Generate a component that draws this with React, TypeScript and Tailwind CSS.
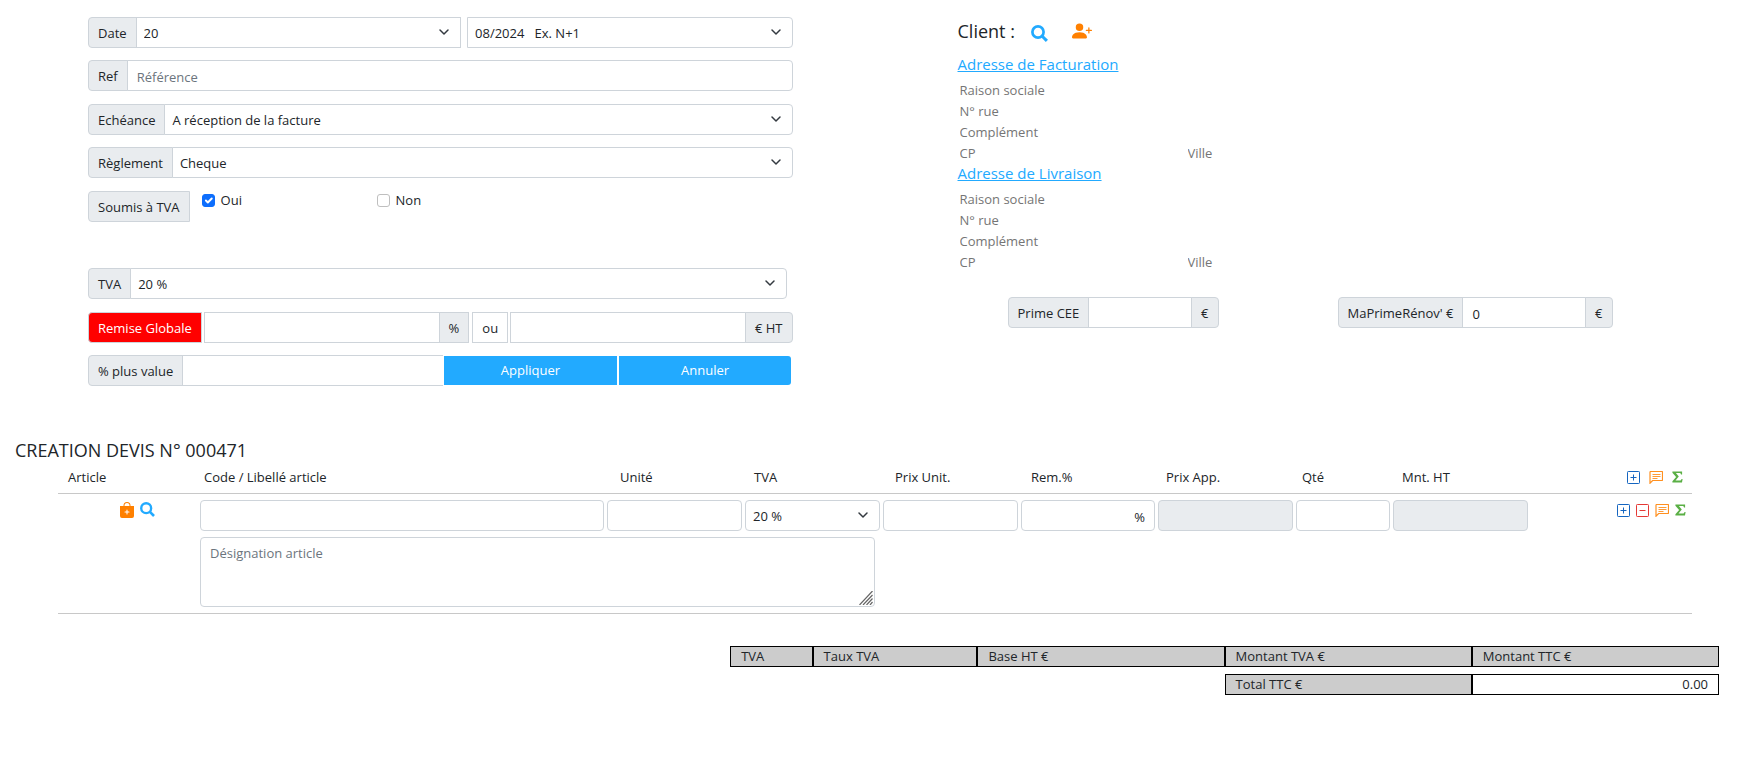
import React, { useState } from "react";
import { BsBagPlusFill, BsPersonPlusFill } from "react-icons/bs";
import clsx from "clsx";

const field =
  "h-[31px] min-w-0 border border-[#ced4da] px-[9px] pt-[2px] text-[13px] text-[#212529] placeholder:text-[#6c757d] outline-none focus:border-[#22aaff] disabled:bg-[#e9ecef]";
const addon =
  "flex h-[31px] shrink-0 items-center whitespace-nowrap border border-[#ced4da] px-[9px] pt-[2px] text-[13px]";

interface SelectProps {
  id: string;
  label?: string;
  options: string[];
  wrapper?: string;
  className?: string;
}

function Select({ id, label, options, wrapper, className }: SelectProps) {
  return (
    <div className={clsx("relative min-w-0", wrapper)}>
      <select
        id={id}
        aria-label={label}
        className={clsx(
          "h-[31px] w-full appearance-none border border-[#ced4da] bg-white pt-[2px] pr-8 pl-[7px] text-[13px] text-[#212529] outline-none",
          className
        )}
      >
        {options.map((option) => (
          <option key={option}>{option}</option>
        ))}
      </select>
      <svg
        className="pointer-events-none absolute top-[9px] right-[11px] h-3 w-3"
        viewBox="0 0 12 12"
        fill="none"
        stroke="#343a40"
        strokeWidth={1.5}
        strokeLinecap="round"
        strokeLinejoin="round"
      >
        <path d="m2 4 4 4 4-4" />
      </svg>
    </div>
  );
}

function SearchIcon({ className }: { className?: string }) {
  return (
    <svg className={clsx("text-[#22aaff]", className)} viewBox="0 0 17 17" fill="none" stroke="currentColor">
      <circle cx="7" cy="7" r="5.6" strokeWidth="2.7" />
      <path d="m11.200 11.200 4.700 4.700" strokeWidth="3" />
    </svg>
  );
}

function SquareIcon({ minus }: { minus?: boolean }) {
  return (
    <svg
      className={clsx("h-[13px] w-[13px]", minus ? "text-[#e53935]" : "text-[#1565c0]")}
      viewBox="0 0 13 13"
      fill="none"
      stroke="currentColor"
    >
      <rect x="0.5" y="0.5" width="12" height="12" rx="0.8" />
      <path d={minus ? "M3.5 6.5h6" : "M3.5 6.5h6M6.5 3.5v6"} />
    </svg>
  );
}

function CommentIcon() {
  return (
    <svg className="h-[13px] w-[14px] text-[#ff9020]" viewBox="0 0 14 13" fill="none" stroke="currentColor">
      <path d="M1 12.2V1.2a.7.7 0 0 1 .7-.7h11.1a.7.7 0 0 1 .7.7v7.6a.7.7 0 0 1-.7.7H3.6L1 12.2z" strokeWidth="1.2" />
      <path d="M3.5 3.5h8M3.5 5.5h8M3.5 7.5h5" strokeWidth="0.9" />
    </svg>
  );
}

function SumIcon() {
  return (
    <svg className="h-[13px] w-[11px] text-[#5aaf45]" viewBox="0 0 11 13" fill="currentColor">
      <path d="M.4.500h9.700v3.100H9C8.800 2.400 8.300 2.100 7.200 2.100H3.900l2.900 3.500-3.300 3.900h4.200c1 0 1.500-.4 1.800-1.500h1.100L10 11.500H.4v-1.200L4.100 6 .4 1.700z" />
    </svg>
  );
}

interface RowActionsProps {
  withMinus?: boolean;
}

function RowActions({ withMinus }: RowActionsProps) {
  return (
    <div className={clsx("flex items-start justify-end", withMinus ? "gap-[6px] pr-[6px]" : "gap-[9px] pr-[9px]")}>
      <button type="button" aria-label="Ajouter une ligne">
        <SquareIcon />
      </button>
      {withMinus && (
        <button type="button" aria-label="Supprimer la ligne">
          <SquareIcon minus />
        </button>
      )}
      <button type="button" aria-label="Ajouter un commentaire">
        <CommentIcon />
      </button>
      <button type="button" aria-label="Ajouter un sous-total">
        <SumIcon />
      </button>
    </div>
  );
}

function Address({ title, prefix }: { title: string; prefix: string }) {
  const line =
    "block h-[21px] w-full min-w-0 bg-transparent px-[2px] text-[13px] placeholder:text-[#757575] outline-none";

  return (
    <div>
      <a href="#" className="block w-fit pb-1 text-[15px] leading-[21px] text-[#22aaff] underline">
        {title}
      </a>
      {["Raison sociale", "N° rue", "Complément"].map((name) => (
        <input key={name} aria-label={`${prefix} ${name}`} placeholder={name} className={line} />
      ))}
      <div className="grid grid-cols-[228px_1fr]">
        <input aria-label={`${prefix} CP`} placeholder="CP" className={line} />
        <input aria-label={`${prefix} Ville`} placeholder="Ville" className={line} />
      </div>
    </div>
  );
}

function QuoteSettings() {
  const [vat, setVat] = useState(true);

  return (
    <form className="w-1/2 pr-[81px] pl-[88px]">
      <div className="flex flex-col gap-[13px]">
        <div className="flex flex-col gap-3">
          <div className="flex">
            <label htmlFor="day" className={clsx(addon, "rounded-l bg-[#e9ecef]")}>Date</label>
            <Select id="day" options={["20"]} wrapper="flex-1 -ml-px" />
            <Select
              id="month"
              label="Mois"
              options={["08/2024\u00a0\u00a0\u00a0Ex. N+1"]}
              wrapper="ml-[6px] flex-1"
              className="rounded-r"
            />
          </div>
          <div className="flex">
            <label htmlFor="ref" className={clsx(addon, "rounded-l bg-[#e9ecef]")}>Ref</label>
            <input id="ref" placeholder="Référence" className={clsx(field, "-ml-px flex-1 rounded-r")} />
          </div>
        </div>
        <div className="flex flex-col gap-3">
          <div className="flex">
            <label htmlFor="due" className={clsx(addon, "rounded-l bg-[#e9ecef]")}>Echéance</label>
            <Select id="due" options={["A réception de la facture"]} wrapper="-ml-px flex-1" className="rounded-r" />
          </div>
          <div className="flex">
            <label htmlFor="payment" className={clsx(addon, "rounded-l bg-[#e9ecef]")}>Règlement</label>
            <Select id="payment" options={["Cheque"]} wrapper="-ml-px flex-1" className="rounded-r" />
          </div>
        </div>
        <div className="flex items-start text-[13px]">
          <span className={clsx(addon, "rounded-l bg-[#e9ecef]")}>Soumis à TVA</span>
          <label className="ml-3 flex w-[175px] items-center gap-[6px]">
            <span className="relative flex">
              <input
                type="checkbox"
                checked={vat}
                onChange={() => setVat(true)}
                className="h-[13px] w-[13px] appearance-none rounded-[3px] border border-[#bfbfbf] checked:border-[#0d6efd] checked:bg-[#0d6efd]"
              />
              {vat && (
                <svg className="pointer-events-none absolute inset-0 h-[13px] w-[13px]" viewBox="0 0 20 20" fill="none" stroke="#fff" strokeWidth={3} strokeLinecap="round" strokeLinejoin="round">
                  <path d="m6 10 3 3 6-6" />
                </svg>
              )}
            </span>
            Oui
          </label>
          <label className="flex items-center gap-[6px]">
            <input
              type="checkbox"
              checked={!vat}
              onChange={() => setVat(false)}
              className="h-[13px] w-[13px] appearance-none rounded-[3px] border border-[#bfbfbf] checked:border-[#0d6efd] checked:bg-[#0d6efd]"
            />
            Non
          </label>
        </div>
      </div>

      <div className="mt-[46px] flex pr-[6px]">
        <label htmlFor="vat" className={clsx(addon, "rounded-l bg-[#e9ecef]")}>TVA</label>
        <Select id="vat" options={["20 %"]} wrapper="-ml-px flex-1" className="rounded-r" />
      </div>
      <div className="mt-[13px] flex">
        <label htmlFor="discount" className={clsx(addon, "rounded-l bg-[#ff0000] text-white")}>Remise Globale</label>
        <input id="discount" className={clsx(field, "ml-[2px] w-0 flex-1")} />
        <span className={clsx(addon, "-ml-px bg-[#e9ecef]")}>%</span>
        <span className={clsx(addon, "ml-[3px]")}>ou</span>
        <input aria-label="Remise € HT" className={clsx(field, "ml-[2px] w-0 flex-1")} />
        <span className={clsx(addon, "-ml-px rounded-r bg-[#e9ecef]")}>€ HT</span>
      </div>
      <div className="mt-3 flex">
        <label htmlFor="markup" className={clsx(addon, "rounded-l bg-[#e9ecef]")}>% plus value</label>
        <input id="markup" className={clsx(field, "-ml-px w-0 flex-[7] border-r-0")} />
        <button type="button" className="my-px ml-px w-0 flex-[5] bg-[#22aaff] text-[13px] text-white">Appliquer</button>
        <button type="button" className="my-px mr-px ml-[2px] w-0 flex-[5] rounded-r-[3px] bg-[#22aaff] text-[13px] text-white">Annuler</button>
      </div>
    </form>
  );
}

function ClientPanel() {
  return (
    <section className="w-1/2 pl-[84px]">
      <div className="mb-[9px] flex h-7 items-center text-[18px]">
        <h2 className="mr-4">Client :</h2>
        <button type="button" aria-label="Rechercher un client" className="mt-1 mr-6">
          <SearchIcon className="h-[17px] w-[17px]" />
        </button>
        <button type="button" aria-label="Nouveau client">
          <BsPersonPlusFill className="h-5 w-5 text-[#ff8000]" />
        </button>
      </div>
      <Address title="Adresse de Facturation" prefix="Facturation" />
      <Address title="Adresse de Livraison" prefix="Livraison" />

      <div className="mt-[25px] flex pl-[50px]">
        <div className="flex w-[211px]">
          <label htmlFor="cee" className={clsx(addon, "rounded-l bg-[#e9ecef]")}>Prime CEE</label>
          <input id="cee" className={clsx(field, "-ml-px w-0 flex-1")} />
          <span className={clsx(addon, "-ml-px rounded-r bg-[#e9ecef]")}>€</span>
        </div>
        <div className="ml-[119px] flex w-[275px]">
          <label htmlFor="renov" className={clsx(addon, "rounded-l bg-[#e9ecef]")}>MaPrimeRénov' €</label>
          <input id="renov" defaultValue="0" className={clsx(field, "-ml-px w-0 flex-1")} />
          <span className={clsx(addon, "-ml-px rounded-r bg-[#e9ecef]")}>€</span>
        </div>
      </div>
    </section>
  );
}

const headings = ["Article", "Code / Libellé article", "Unité", "TVA", "Prix Unit.", "Rem.%", "Prix App.", "Qté", "Mnt. HT"];

function Lines() {
  return (
    <table className="mt-[5px] mr-[55px] ml-[58px] block text-[13px]">
      <thead className="block">
        <tr className="grid grid-cols-[136fr_416fr_134fr_141fr_136fr_135fr_136fr_100fr_200fr_100fr] border-b border-[#c8c8c8] pb-[6px]">
          {headings.map((heading) => (
            <th key={heading} className="pl-[10px] text-left leading-5 font-normal">{heading}</th>
          ))}
          <th className="pt-1 font-normal">
            <RowActions />
          </th>
        </tr>
      </thead>
      <tbody className="block border-b border-[#c8c8c8] pt-[6px] pb-[6px]">
        <tr className="grid grid-cols-[142fr_407fr_138fr_138fr_138fr_137fr_138fr_97fr_138fr_161fr]">
          <td className="flex items-start justify-center gap-[5px] pt-[2px] pr-1">
            <button type="button" aria-label="Nouvel article" className="ml-5">
              <BsBagPlusFill className="h-4 w-4 text-[#ff8000]" />
            </button>
            <button type="button" aria-label="Rechercher un article">
              <SearchIcon className="h-[15px] w-[15px]" />
            </button>
          </td>
          <td className="pr-[3px]"><input aria-label="Code article" className={clsx(field, "w-full rounded")} /></td>
          <td className="pr-[3px]"><input aria-label="Unité" className={clsx(field, "w-full rounded")} /></td>
          <td className="pr-[3px]"><Select id="line-vat" label="TVA" options={["20 %"]} className="rounded" /></td>
          <td className="pr-[3px]"><input aria-label="Prix unitaire" className={clsx(field, "w-full rounded")} /></td>
          <td className="pr-[3px]"><input aria-label="Remise" defaultValue="%" className={clsx(field, "w-full rounded text-right")} /></td>
          <td className="pr-[3px]"><input aria-label="Prix appliqué" disabled className={clsx(field, "w-full rounded")} /></td>
          <td className="pr-[3px]"><input aria-label="Quantité" className={clsx(field, "w-full rounded")} /></td>
          <td className="pr-[3px]"><input aria-label="Montant HT" disabled className={clsx(field, "w-full rounded")} /></td>
          <td className="pt-1">
            <RowActions withMinus />
          </td>
        </tr>
        <tr className="grid grid-cols-[142fr_675fr_817fr] pt-[6px]">
          <td />
          <td className="relative">
            <textarea
              aria-label="Désignation article"
              placeholder="Désignation article"
              className="block h-[70px] w-full resize-none rounded border border-[#ced4da] px-[9px] py-[5px] leading-5 outline-none placeholder:text-[#6c757d]"
            />
            {/* Resize grip */}
            <svg className="pointer-events-none absolute right-[2px] bottom-[2px] h-[14px] w-[14px]" viewBox="0 0 14 14" stroke="#666" strokeWidth="1.2">
              <path d="M.5 14 13.500 0M4 14l9.500-10M7.500 14l6-6.500M11 14l2.500-3" />
            </svg>
          </td>
        </tr>
      </tbody>
    </table>
  );
}

function Totals() {
  const cell = "border border-black px-[10px] leading-[19px] font-normal";

  return (
    <table className="mt-8 mr-7 ml-auto block w-[56.6%] text-[13px]">
      <thead className="block">
        <tr className="grid grid-cols-[1fr_2fr_3fr_3fr_3fr] bg-[#cccccc]">
          {["TVA", "Taux TVA", "Base HT €", "Montant TVA €", "Montant TTC €"].map((name) => (
            <th key={name} className={clsx(cell, "text-left")}>{name}</th>
          ))}
        </tr>
      </thead>
      <tbody className="block pt-[7px]">
        <tr className="ml-auto grid w-1/2 grid-cols-2">
          <th className={clsx(cell, "bg-[#cccccc] text-left")}>Total TTC €</th>
          <td className={clsx(cell, "text-right")}>0.00</td>
        </tr>
      </tbody>
    </table>
  );
}

export default function App() {
  return (
    <main className="min-h-screen bg-white pb-8 font-['Open_Sans','Noto_Sans',sans-serif] text-[#212529]">
      <div className="flex items-start pt-[17px]">
        <QuoteSettings />
        <ClientPanel />
      </div>
      <h1 className="mt-[52px] pl-[15px] text-[18px] leading-6">CREATION DEVIS N° 000471</h1>
      <Lines />
      <Totals />
    </main>
  );
}
